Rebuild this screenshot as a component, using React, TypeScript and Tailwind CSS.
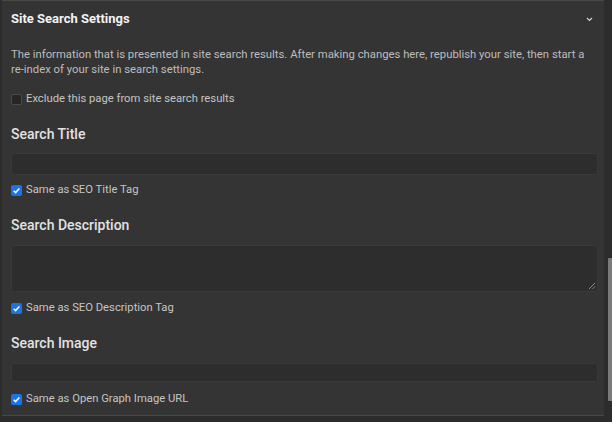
import React from "react";

function Check({ checked, label }: { checked?: boolean; label: string }) {
  return (
    <div className="flex h-4 items-center gap-[4px]">
      {checked ? (
        <span className="flex h-[11px] w-[11px] items-center justify-center rounded-[2px] bg-[#1b73e8]">
          <svg viewBox="0 0 12 12" className="h-[9px] w-[9px]">
            <path
              d="M2.2 6.3 L4.8 8.8 L9.8 3.2"
              fill="none"
              stroke="#fff"
              strokeWidth="2"
            />
          </svg>
        </span>
      ) : (
        <span className="h-[11px] w-[11px] rounded-[2px] border border-[#4a4a4a] bg-[#262626]" />
      )}
      <span className="text-[11.25px] text-[#c4c4c4]">{label}</span>
    </div>
  );
}

function Heading({ children, className }: { children: string; className?: string }) {
  return (
    <div className={`h-5 text-[14px] leading-5 font-medium text-[#e2e2e2] ${className ?? ""}`}>
      {children}
    </div>
  );
}

export default function App() {
  return (
    <div
      className="relative h-[422px] w-[612px] overflow-hidden bg-[#2c2c2c]"
      style={{ fontFamily: "Roboto, 'Liberation Sans', sans-serif" }}
    >
      <div className="mr-[8px] ml-[2px] border-t border-b border-[#484848] bg-[#343434] pr-[6px] pb-[8px] pl-[9px]">
        <div className="flex h-[36px] items-center justify-between">
          <span className="text-[13px] font-bold text-[#f2f2f2]">Site Search Settings</span>
          <svg viewBox="0 0 8 6" className="mr-[5px] h-[5px] w-[7px]">
            <path d="M1 1.2 L4 4.2 L7 1.2" fill="none" stroke="#d8d8d8" strokeWidth="1.3" />
          </svg>
        </div>
        <p className="mt-[10px] text-[11.3px] leading-[15px] text-[#bdbdbd]">
          The information that is presented in site search results. After making changes here,
          republish your site, then start a re-index of your site in search settings.
        </p>
        <div className="mt-[14px]">
          <Check label="Exclude this page from site search results" />
        </div>

        <Heading className="mt-[17px]">Search Title</Heading>
        <div className="mt-[9px] h-[22px] rounded-[3px] border border-[#393939] bg-[#2d2d2d]" />
        <div className="mt-[7px]">
          <Check checked label="Same as SEO Title Tag" />
        </div>

        <Heading className="mt-[17px]">Search Description</Heading>
        <div className="relative mt-[10px] h-[47px] rounded-[3px] border border-[#393939] bg-[#2d2d2d]">
          <svg viewBox="0 0 8 8" className="absolute right-[1px] bottom-[1px] h-[8px] w-[8px]">
            <path d="M7 1 L1 7 M7 4.5 L4.5 7" stroke="#8a8a8a" strokeWidth="1" />
          </svg>
        </div>
        <div className="mt-[8px]">
          <Check checked label="Same as SEO Description Tag" />
        </div>

        <Heading className="mt-[17px]">Search Image</Heading>
        <div className="mt-[10px] h-[19px] rounded-[3px] border border-[#393939] bg-[#2d2d2d]" />
        <div className="mt-[9px]">
          <Check checked label="Same as Open Graph Image URL" />
        </div>
      </div>
      <div className="absolute top-[258px] right-0 h-[143px] w-[4px] rounded-l-[1px] bg-[#7b7b7b]" />
    </div>
  );
}
